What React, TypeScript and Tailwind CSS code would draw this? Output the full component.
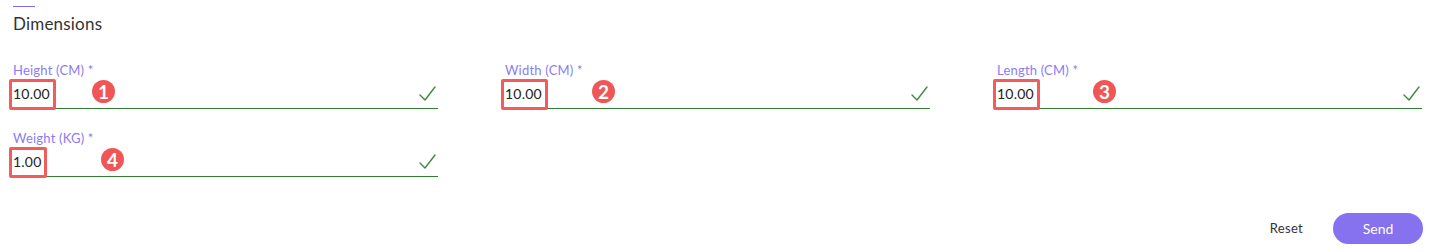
import React from "react";

interface Field {
  label: string;
  value: string;
  badge: string;
  badgeLeft: string;
}

const fields: Field[] = [
  { label: "Height (CM) *", value: "10.00", badge: "1", badgeLeft: "left-[79px]" },
  { label: "Width (CM) *", value: "10.00", badge: "2", badgeLeft: "left-[87px]" },
  { label: "Length (CM) *", value: "10.00", badge: "3", badgeLeft: "left-[96px]" },
  { label: "Weight (KG) *", value: "1.00", badge: "4", badgeLeft: "left-[88px]" },
];

function CheckIcon() {
  return (
    <svg width="17" height="16" viewBox="0 0 17 16" fill="none" className="shrink-0">
      <polyline points="1,9 6,14 16,1" stroke="#3d8b40" strokeWidth="1.4" strokeLinecap="round" strokeLinejoin="round" />
    </svg>
  );
}

function DimensionField({ field }: { field: Field }) {
  return (
    <div className="flex flex-col">
      <label className="text-[13px] leading-[16px] text-[#8a7cf4] tracking-[0.2px]">{field.label}</label>
      <div className="relative h-[31px] flex items-center justify-between border-b border-[#2e7d32]">
        <span className="relative text-[14px] text-[#222] pt-[1px] tracking-[0.2px]">
          {field.value}
          {/* annotation box */}
          <span className="absolute -left-[4px] -right-[6px] -top-[3px] -bottom-[6px] border-[3px] border-[#f45b5b] rounded-[2px]" />
        </span>
        <span
          className={`absolute ${field.badgeLeft} top-[2px] w-[23px] h-[23px] rounded-full bg-[#f05656] text-white text-[19px] font-bold leading-none flex items-center justify-center`}
        >
          {field.badge}
        </span>
        <span className="mr-[2px] mt-[2px]">
          <CheckIcon />
        </span>
      </div>
    </div>
  );
}

export default function App() {
  return (
    <div
      className="w-[1437px] h-[252px] bg-white pl-[13px] pr-[15px] pt-[6px]"
      style={{ fontFamily: "Lato, 'Open Sans', sans-serif" }}
    >
      <div className="w-[22px] h-px bg-[#7c6cf0]" />
      <h2 className="mt-[5px] text-[17px] leading-[24px] text-[#333] tracking-[0.2px]">Dimensions</h2>

      <div className="mt-[26px] grid grid-cols-3 gap-x-[67px] gap-y-[21px]">
        {fields.map((f) => (
          <DimensionField key={f.label} field={f} />
        ))}
      </div>

      <div className="mt-[36px] flex justify-end items-center -mr-px">
        <button className="text-[13px] text-[#333] mr-[30px] tracking-[0.3px]">Reset</button>
        <button className="w-[90px] h-[31px] rounded-full bg-[#8671ee] text-white text-[14px]">Send</button>
      </div>
    </div>
  );
}
